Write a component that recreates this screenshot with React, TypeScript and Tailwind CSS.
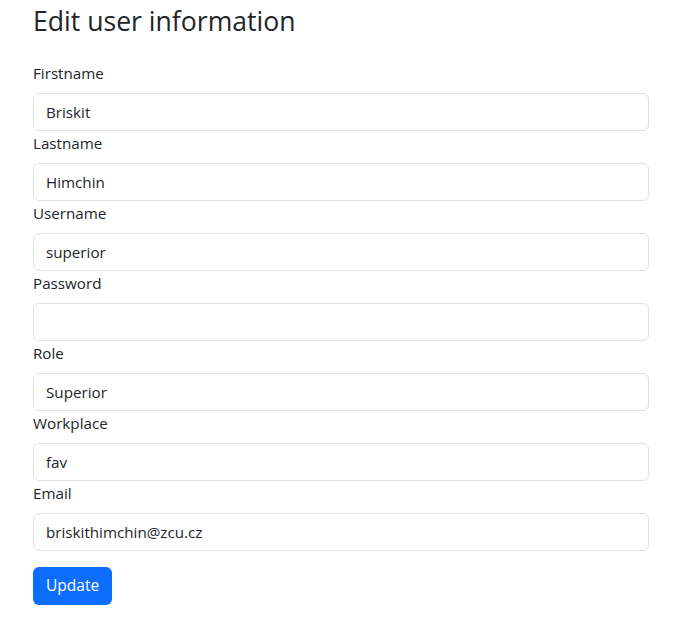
const fields = [
  { label: 'Firstname', value: 'Briskit' },
  { label: 'Lastname', value: 'Himchin' },
  { label: 'Username', value: 'superior' },
  { label: 'Password', value: '', type: 'password' },
  { label: 'Role', value: 'Superior' },
  { label: 'Workplace', value: 'fav' },
  { label: 'Email', value: 'briskithimchin@zcu.cz' },
]

const App = () => {
  return (
    <div className="min-h-screen bg-white text-[#212529] font-['Open_Sans',sans-serif]">
      <div className="w-[616px] ml-[33px] pt-[5px]">
        <h2 className="text-[26.6px] leading-[32px] font-normal mb-[24px]">Edit user information</h2>
        <form onSubmit={(e) => e.preventDefault()}>
          {fields.map(field => (
            <div key={field.label}>
              <label className="block text-[15.2px] leading-[24px] mb-2">{field.label}</label>
              <input
                type={field.type ?? 'text'}
                defaultValue={field.value}
                className="block w-full h-[38px] px-3 text-[15.2px] border border-[#dee2e6] rounded-md outline-none"
              />
            </div>
          ))}
          <button
            type="submit"
            className="mt-4 h-[38px] px-[13px] bg-[#0d6efd] text-white text-[15.5px] rounded-md"
          >
            Update
          </button>
        </form>
      </div>
    </div>
  )
}

export default App
